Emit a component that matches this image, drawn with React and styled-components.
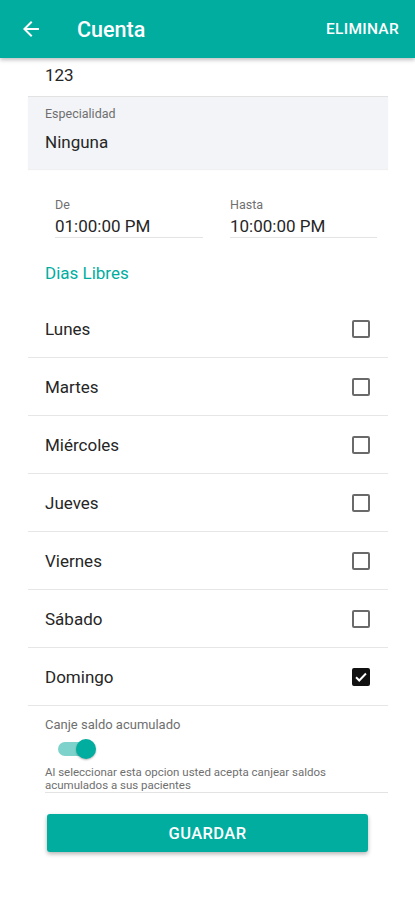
import React from 'react';
import styled, { createGlobalStyle } from 'styled-components';

const teal = '#00ad9f';

const GlobalStyle = createGlobalStyle`
  body {
    margin: 0;
    background: #fff;
    font-family: Roboto, "Liberation Sans", sans-serif;
    color: #262626;
  }
`;

const Page = styled.div`
  width: 415px;
  height: 900px;
  overflow: hidden;
  display: flex;
  flex-direction: column;
`;

const Header = styled.header`
  height: 58px;
  flex-shrink: 0;
  background: ${teal};
  display: flex;
  align-items: center;
  padding: 0 16px 0 19px;
  box-shadow: 0 2px 4px rgba(0, 0, 0, 0.25);
  position: relative;
  z-index: 2;
`;

const BackButton = styled.div`
  width: 24px;
  height: 24px;
  display: flex;
  align-items: center;
  justify-content: center;
  margin-right: 34px;
`;

const Title = styled.h1`
  margin: 0;
  flex: 1;
  font-size: 21.5px;
  font-weight: 500;
  color: #fff;
`;

const HeaderAction = styled.span`
  font-size: 15.5px;
  font-weight: 500;
  color: #fff;
  letter-spacing: 0.3px;
`;

const Content = styled.div`
  padding: 0 27px 0 28px;
  display: flex;
  flex-direction: column;
`;

const TopValue = styled.div`
  height: 38px;
  padding: 7px 0 0 17px;
  box-sizing: border-box;
  font-size: 17px;
  line-height: 20px;
`;

const FilledField = styled.div`
  height: 73px;
  box-sizing: border-box;
  background: #f2f4f7;
  border-top: 1px solid #e2e2e2;
  padding: 9px 17px 0;
  box-shadow: 0 1px 1px rgba(0, 0, 0, 0.06);
`;

const SmallLabel = styled.div`
  font-size: ${p => p.$size || 12.5}px;
  line-height: 15px;
  color: #6f6f6f;
`;

const FieldValue = styled.div`
  font-size: 17px;
  line-height: 20px;
  margin-top: ${p => p.$gap || 0}px;
`;

const TimeRow = styled.div`
  display: grid;
  grid-template-columns: 148px 147px;
  column-gap: 27px;
  padding-left: 27px;
  margin-top: 28px;
`;

const TimeField = styled.div`
  border-bottom: 1px solid #e3e3e3;
  padding-bottom: 1px;
`;

const SectionTitle = styled.div`
  color: ${teal};
  font-size: 17px;
  line-height: 20px;
  padding-left: 17px;
  margin-top: 25px;
  margin-bottom: 17px;
`;

const DayRow = styled.label`
  height: 58px;
  box-sizing: border-box;
  border-bottom: 1px solid #e6e6e6;
  display: flex;
  align-items: center;
  justify-content: space-between;
  padding: 0 18px 0 17px;
  font-size: 17px;
`;

const Box = styled.span`
  width: 14px;
  height: 14px;
  border: 2px solid ${p => (p.$checked ? '#111' : '#6a6a6a')};
  border-radius: 2px;
  background: ${p => (p.$checked ? '#111' : 'transparent')};
  display: flex;
  align-items: center;
  justify-content: center;
`;

const SwitchSection = styled.div`
  margin-left: 17px;
  padding-top: 11px;
  border-bottom: 1px solid #e3e3e3;
`;

const Track = styled.div`
  width: 34px;
  height: 14px;
  border-radius: 7px;
  background: #7dd3cb;
  margin: 10px 0 10px 13px;
  position: relative;
`;

const Thumb = styled.div`
  position: absolute;
  right: -4px;
  top: -3px;
  width: 20px;
  height: 20px;
  border-radius: 50%;
  background: ${teal};
  box-shadow: 0 1px 2px rgba(0, 0, 0, 0.3);
`;

const Hint = styled.div`
  font-size: 11.5px;
  line-height: 13px;
  color: #6f6f6f;
  width: 310px;
`;

const SaveButton = styled.button`
  margin: 21px 0 0 19px;
  width: 321px;
  height: 38px;
  border: none;
  border-radius: 3px;
  background: ${teal};
  color: #fff;
  font-family: inherit;
  font-size: 16.5px;
  font-weight: 500;
  letter-spacing: 0.4px;
  box-shadow: 0 2px 4px rgba(0, 0, 0, 0.3);
`;

const days = [
  { name: 'Lunes', checked: false },
  { name: 'Martes', checked: false },
  { name: 'Miércoles', checked: false },
  { name: 'Jueves', checked: false },
  { name: 'Viernes', checked: false },
  { name: 'Sábado', checked: false },
  { name: 'Domingo', checked: true },
];

function Checkbox({ checked }) {
  return (
    <Box $checked={checked}>
      {checked && (
        <svg width="14" height="14" viewBox="0 0 24 24">
          <path d="M3.5 12.5l5.5 5.5L20.5 6" fill="none" stroke="#fff" strokeWidth="3.4" />
        </svg>
      )}
    </Box>
  );
}

export default function App() {
  return (
    <Page>
      <GlobalStyle />
      <Header>
        <BackButton>
          <svg width="24" height="24" viewBox="0 0 24 24">
            <path d="M20 11H7.83l5.59-5.59L12 4l-8 8 8 8 1.41-1.41L7.83 13H20v-2z" fill="#fff" />
          </svg>
        </BackButton>
        <Title>Cuenta</Title>
        <HeaderAction>ELIMINAR</HeaderAction>
      </Header>
      <Content>
        <TopValue>123</TopValue>
        <FilledField>
          <SmallLabel>Especialidad</SmallLabel>
          <FieldValue $gap={11}>Ninguna</FieldValue>
        </FilledField>
        <TimeRow>
          <TimeField>
            <SmallLabel>De</SmallLabel>
            <FieldValue $gap={4}>01:00:00 PM</FieldValue>
          </TimeField>
          <TimeField>
            <SmallLabel>Hasta</SmallLabel>
            <FieldValue $gap={4}>10:00:00 PM</FieldValue>
          </TimeField>
        </TimeRow>
        <SectionTitle>Dias Libres</SectionTitle>
        {days.map(d => (
          <DayRow key={d.name}>
            <span>{d.name}</span>
            <Checkbox checked={d.checked} />
          </DayRow>
        ))}
        <SwitchSection>
          <SmallLabel $size={13}>Canje saldo acumulado</SmallLabel>
          <Track>
            <Thumb />
          </Track>
          <Hint>Al seleccionar esta opcion usted acepta canjear saldos acumulados a sus pacientes</Hint>
        </SwitchSection>
        <SaveButton>GUARDAR</SaveButton>
      </Content>
    </Page>
  );
}
